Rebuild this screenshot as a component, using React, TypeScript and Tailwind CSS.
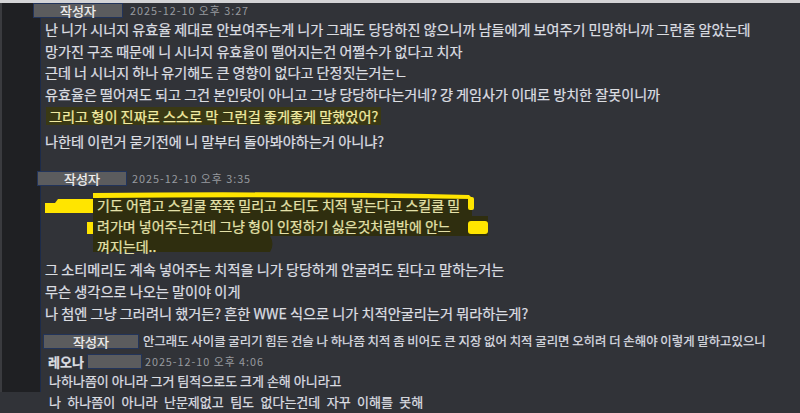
import React from "react";

const font = "font-['Noto_Sans_CJK_KR','Noto_Sans',sans-serif]";

function NameBox({ w, className = "" }: { w: string; className?: string }) {
  return (
    <div
      className={`${w} h-[15px] shrink-0 bg-[#5b5c5e] border border-[#22345a] flex items-center justify-center text-[13px] leading-none text-[#f2f2f2] ${className}`}
    >
      작성자
    </div>
  );
}

function Stamp({ children, className = "" }: { children: React.ReactNode; className?: string }) {
  return (
    <span className={`text-[10.8px] tracking-[1px] leading-none text-[#979a9f] whitespace-nowrap [-webkit-text-stroke:0px] ${className}`}>
      {children}
    </span>
  );
}

export default function App() {
  return (
    <div className={`w-[800px] h-[413px] overflow-hidden bg-[#313338] ${font} flex flex-col`}>
      <div className="h-[3px] shrink-0 bg-[#d4d4d6]" />
      <div className="flex flex-1 min-h-0">
        <div className="w-[41px] h-[389px] shrink-0 bg-[#1f2023] border-l-2 border-l-[#3a3b3f] border-r border-r-[#1c2b4a]" />
        <div className="flex-1 min-w-0 flex flex-col font-normal text-[14.1px] text-[#dcdee2] [-webkit-text-stroke:0.25px]">
          {/* header 1 */}
          <div className="flex items-center h-[15px] ml-[-8px]">
            <NameBox w="w-[90px]" />
            <Stamp className="ml-[7px]">2025-12-10 오후 3:27</Stamp>
          </div>
          <div className="pl-[4px] pt-[1px] leading-[21.5px] whitespace-nowrap">
            <div>난 니가 시너지 유효율 제대로 안보여주는게 니가 그래도 당당하진 않으니까 남들에게 보여주기 민망하니까 그런줄 알았는데</div>
            <div>망가진 구조 때문에 니 시너지 유효율이 떨어지는건 어쩔수가 없다고 치자</div>
            <div>근데 너 시너지 하나 유기해도 큰 영향이 없다고 단정짓는거는ㄴ</div>
            <div>유효율은 떨어져도 되고 그건 본인탓이 아니고 그냥 당당하다는거네? 걍 게임사가 이대로 방치한 잘못이니까</div>
          </div>
          <div className="h-[22px] flex items-center pl-[5px] text-[14.2px]">
            <span className="bg-[#3a3914] text-[#f1eba2] px-[3px] leading-[18px] whitespace-nowrap">
              그리고 형이 진짜로 스스로 막 그런걸 좋게좋게 말했었어?
            </span>
          </div>
          <div className="pl-[4px] mt-[3px] leading-[22px] whitespace-nowrap text-[14.2px]">
            나한테 이런거 묻기전에 니 말부터 돌아봐야하는거 아니냐?
          </div>

          {/* header 2 */}
          <div className="flex items-center h-[15px] mt-[19px] ml-[-4px]">
            <NameBox w="w-[90px]" />
            <Stamp className="ml-[5px]">2025-12-10 오후 3:35</Stamp>
          </div>

          {/* highlighted block */}
          <div className="relative mt-[5px] h-[67px] text-[14px]">
            <svg className="absolute left-0 top-0" width="500" height="70" viewBox="0 0 500 70">
              <path d="M52 6 H431 V25 H447 V45 H229 Q234 53 229 61 H52 Z" fill="#2f2e0f" />
              <path d="M52 2 Q250 0 428 4 L432 8 Q250 5 52 7 Z" fill="#ffe500" />
              <path d="M4 12 H14 L17 8 H52 V22 H4 Z" fill="#ffe500" />
              <rect x="46" y="31" width="6" height="12" fill="#ffe500" />
              <rect x="427" y="6" width="6" height="13" rx="2" fill="#ffe500" />
              <rect x="427" y="30" width="20" height="13" rx="3" fill="#ffe500" />
            </svg>
            <div className="relative pl-[56px] pt-[4px] leading-[20.5px] text-[#e4e1a9] whitespace-nowrap">
              <div>기도 어렵고 스킬쿨 쭉쭉 밀리고 소티도 치적 넣는다고 스킬쿨 밀</div>
              <div>려가며 넣어주는건데 그냥 형이 인정하기 싫은것처럼밖에 안느</div>
              <div>껴지는데..</div>
            </div>
          </div>

          <div className="pl-[4px] leading-[22px] whitespace-nowrap text-[14.2px]">
            <div>그 소티메리도 계속 넣어주는 치적을 니가 당당하게 안굴려도 된다고 말하는거는</div>
            <div>무슨 생각으로 나오는 말이야 이게</div>
            <div>나 첨엔 그냥 그러려니 했거든? 흔한 WWE 식으로 니가 치적안굴리는거 뭐라하는게?</div>
          </div>

          {/* header 3 */}
          <div className="flex items-center h-[15px] mt-[10px] ml-[2px]">
            <NameBox w="w-[96px]" />
            <span className="ml-[4px] text-[12.4px] leading-none whitespace-nowrap">
              안그래도 사이클 굴리기 힘든 건슬 나 하나쯤 치적 좀 비어도 큰 지장 없어 치적 굴리면 오히려 더 손해야 이렇게 말하고있으니
            </span>
          </div>
          <div className="flex items-center h-[16px] mt-[4px] pl-[7px]">
            <span className="font-bold text-[13px] leading-none">레오나</span>
            <div className="ml-[3px] w-[55px] h-[15px] bg-[#5b5c5e] border border-[#22345a]" />
            <Stamp className="ml-[3px]">2025-12-10 오후 4:06</Stamp>
          </div>
          <div className="pl-[8px] leading-[21px] whitespace-nowrap mt-[1px] text-[13px]">
            <div>나하나쯤이 아니라 그거 팀적으로도 크게 손해 아니라고</div>
            <div className="[word-spacing:3.5px]">나 하나쯤이 아니라 난문제없고 팀도 없다는건데 자꾸 이해를 못해</div>
          </div>
        </div>
      </div>
    </div>
  );
}
